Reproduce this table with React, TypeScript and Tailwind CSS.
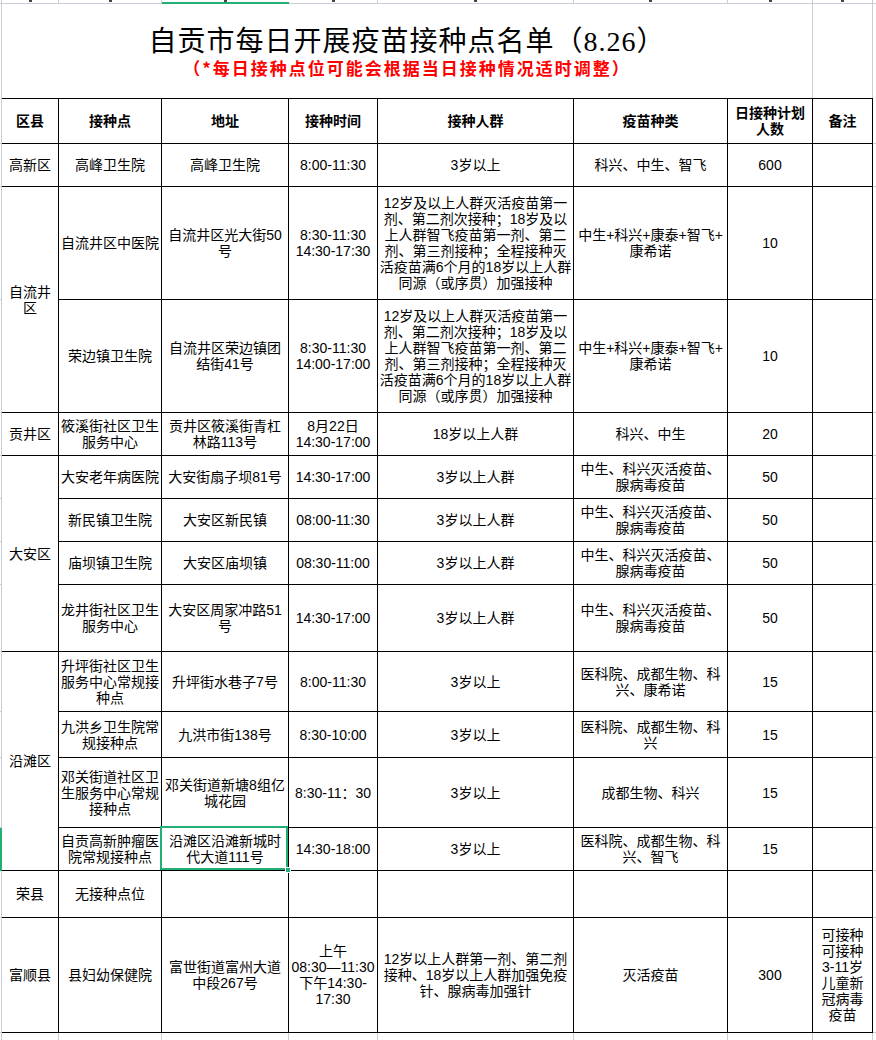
const GRID = "grid grid-cols-[2px_57px_103px_127px_89px_196px_154px_85px_60px_3px]";
const LINE = "border-[#c8cdd8]";

type Row = {
  district?: { lines: string[]; span: 1 | 2 | 4 };
  site: string[];
  addr: string[];
  time: string[];
  who: string[];
  vac: string[];
  count: string;
  note?: string[];
  selected?: boolean;
};

const LONG = [
  "12岁及以上人群灭活疫苗第一",
  "剂、第二剂次接种；18岁及以",
  "上人群智飞疫苗第一剂、第二",
  "剂、第三剂接种；全程接种灭",
  "活疫苗满6个月的18岁以上人群",
  "同源（或序贯）加强接种",
];
const ZKX = ["中生+科兴+康泰+智飞+", "康希诺"];
const DAAN = ["中生、科兴灭活疫苗、", "腺病毒疫苗"];

const ROWS: Row[] = [
  { district: { lines: ["高新区"], span: 1 }, site: ["高峰卫生院"], addr: ["高峰卫生院"], time: ["8:00-11:30"], who: ["3岁以上"], vac: ["科兴、中生、智飞"], count: "600" },
  { district: { lines: ["自流井", "区"], span: 2 }, site: ["自流井区中医院"], addr: ["自流井区光大街50", "号"], time: ["8:30-11:30", "14:30-17:30"], who: LONG, vac: ZKX, count: "10" },
  { site: ["荣边镇卫生院"], addr: ["自流井区荣边镇团", "结街41号"], time: ["8:30-11:30", "14:00-17:00"], who: LONG, vac: ZKX, count: "10" },
  { district: { lines: ["贡井区"], span: 1 }, site: ["筱溪街社区卫生", "服务中心"], addr: ["贡井区筱溪街青杠", "林路113号"], time: ["8月22日", "14:30-17:00"], who: ["18岁以上人群"], vac: ["科兴、中生"], count: "20" },
  { district: { lines: ["大安区"], span: 4 }, site: ["大安老年病医院"], addr: ["大安街扇子坝81号"], time: ["14:30-17:00"], who: ["3岁以上人群"], vac: DAAN, count: "50" },
  { site: ["新民镇卫生院"], addr: ["大安区新民镇"], time: ["08:00-11:30"], who: ["3岁以上人群"], vac: DAAN, count: "50" },
  { site: ["庙坝镇卫生院"], addr: ["大安区庙坝镇"], time: ["08:30-11:00"], who: ["3岁以上人群"], vac: DAAN, count: "50" },
  { site: ["龙井街社区卫生", "服务中心"], addr: ["大安区周家冲路51", "号"], time: ["14:30-17:00"], who: ["3岁以上人群"], vac: DAAN, count: "50" },
  { district: { lines: ["沿滩区"], span: 4 }, site: ["升坪街社区卫生", "服务中心常规接", "种点"], addr: ["升坪街水巷子7号"], time: ["8:00-11:30"], who: ["3岁以上"], vac: ["医科院、成都生物、科", "兴、康希诺"], count: "15" },
  { site: ["九洪乡卫生院常", "规接种点"], addr: ["九洪市街138号"], time: ["8:30-10:00"], who: ["3岁以上"], vac: ["医科院、成都生物、科", "兴"], count: "15" },
  { site: ["邓关街道社区卫", "生服务中心常规", "接种点"], addr: ["邓关街道新塘8组亿", "城花园"], time: ["8:30-11：30"], who: ["3岁以上"], vac: ["成都生物、科兴"], count: "15" },
  { site: ["自贡高新肿瘤医", "院常规接种点"], addr: ["沿滩区沿滩新城时", "代大道111号"], time: ["14:30-18:00"], who: ["3岁以上"], vac: ["医科院、成都生物、科", "兴、智飞"], count: "15", selected: true },
  { district: { lines: ["荣县"], span: 1 }, site: ["无接种点位"], addr: [], time: [], who: [], vac: [], count: "" },
  {
    district: { lines: ["富顺县"], span: 1 },
    site: ["县妇幼保健院"],
    addr: ["富世街道富州大道", "中段267号"],
    time: ["上午", "08:30—11:30", "下午14:30-", "17:30"],
    who: ["12岁以上人群第一剂、第二剂", "接种、18岁以上人群加强免疫", "针、腺病毒加强针"],
    vac: ["灭活疫苗"],
    count: "300",
    note: ["可接种", "可接种", "3-11岁", "儿童新", "冠病毒", "疫苗"],
  },
];

function Cell({
  lines,
  className = "",
  children,
}: {
  lines: string[];
  className?: string;
  children?: React.ReactNode;
}) {
  return (
    <div
      className={[
        "flex flex-col items-center justify-center border-r border-b border-black text-center text-[14px] leading-[16px]",
        className,
      ].join(" ")}
    >
      {lines.map((l, i) => (
        <span key={i} className="block whitespace-nowrap">
          {l}
        </span>
      ))}
      {children}
    </div>
  );
}

function Gutter({ selected }: { selected?: boolean }) {
  return selected ? (
    <div className="bg-[#21b073]" />
  ) : (
    <div className={`border-r border-b ${LINE}`} />
  );
}

function Filler() {
  return <div className={`border-b ${LINE}`} />;
}

const HEAD = ["区县", "接种点", "地址", "接种时间", "接种人群", "疫苗种类"];
const COLUMN_COUNT = 8;

export default function App() {
  return (
    <div
      className="relative h-[1040px] w-[876px] overflow-hidden bg-white text-black"
      style={{ fontFamily: '"Liberation Sans", "Noto Sans CJK SC", sans-serif' }}
    >
      {/* cut-off column header strip */}
      <div className={`${GRID} h-[3px]`}>
        <div className={`border-r border-b ${LINE}`} />
        {Array.from({ length: COLUMN_COUNT }).map((_, i) => (
          <div
            key={i}
            className={[
              "flex justify-center",
              i === 2 ? "border-b-2 border-[#21b073]" : `border-r border-b ${LINE}`,
            ].join(" ")}
          >
            <span className="h-[2px] w-[3px] bg-[#444]" />
          </div>
        ))}
        <div className={`border-b ${LINE}`} />
      </div>

      {/* title row */}
      <div className={`${GRID} h-[95px]`}>
        <div className={`border-r ${LINE}`} />
        <div className={`col-span-7 flex flex-col items-center border-r ${LINE} pt-[23px]`}>
          <div
            className="h-[31px] text-[28px] font-normal leading-[31px] tracking-[1px]"
            style={{ fontFamily: '"Liberation Serif", "Noto Sans CJK SC", serif' }}
          >
            自贡市每日开展疫苗接种点名单（8.26）
          </div>
          <div
            className="mt-[1px] h-[20px] text-[17px] font-bold leading-[20px] tracking-[2px] text-[#ff0000]"
            style={{ fontFamily: '"Noto Sans CJK SC", sans-serif' }}
          >
            （*每日接种点位可能会根据当日接种情况适时调整）
          </div>
        </div>
        <div className={`border-r ${LINE}`} />
        <div />
      </div>

      {/* table */}
      <div
        className={`${GRID} grid-rows-[46px_43px_113px_113px_43px_43px_43px_43px_67px_60px_46px_70px_43px_47px_115px]`}
      >
        <Gutter />
        {HEAD.map((h) => (
          <Cell key={h} lines={[h]} className="border-t font-bold" />
        ))}
        <Cell lines={["日接种计划", "人数"]} className="border-t font-bold" />
        <Cell lines={["备注"]} className="border-t font-bold" />
        <Filler />

        {ROWS.map((r, i) => (
          <RowCells key={i} row={r} />
        ))}
      </div>

      {/* empty sheet row */}
      <div className={`${GRID} h-[20px]`}>
        {Array.from({ length: 9 }).map((_, i) => (
          <div key={i} className={`border-r border-b ${LINE}`} />
        ))}
        <div />
      </div>
    </div>
  );
}

function RowCells({ row }: { row: Row }) {
  const span =
    row.district?.span === 4 ? "row-span-4" : row.district?.span === 2 ? "row-span-2" : "";
  return (
    <>
      <Gutter selected={row.selected} />
      {row.district && <Cell lines={row.district.lines} className={span} />}
      <Cell lines={row.site} />
      <Cell lines={row.addr} className={row.selected ? "relative" : ""}>
        {row.selected && (
          <>
            <span className="pointer-events-none absolute top-[-2px] left-[-2px] right-0 bottom-0 border-2 border-[#21b073]" />
            <span className="absolute right-[-3px] bottom-[-3px] h-[6px] w-[6px] border border-white bg-[#21b073]" />
          </>
        )}
      </Cell>
      <Cell lines={row.time} />
      <Cell lines={row.who} />
      <Cell lines={row.vac} />
      <Cell lines={row.count ? [row.count] : []} />
      <Cell lines={row.note ?? []} />
      <Filler />
    </>
  );
}
